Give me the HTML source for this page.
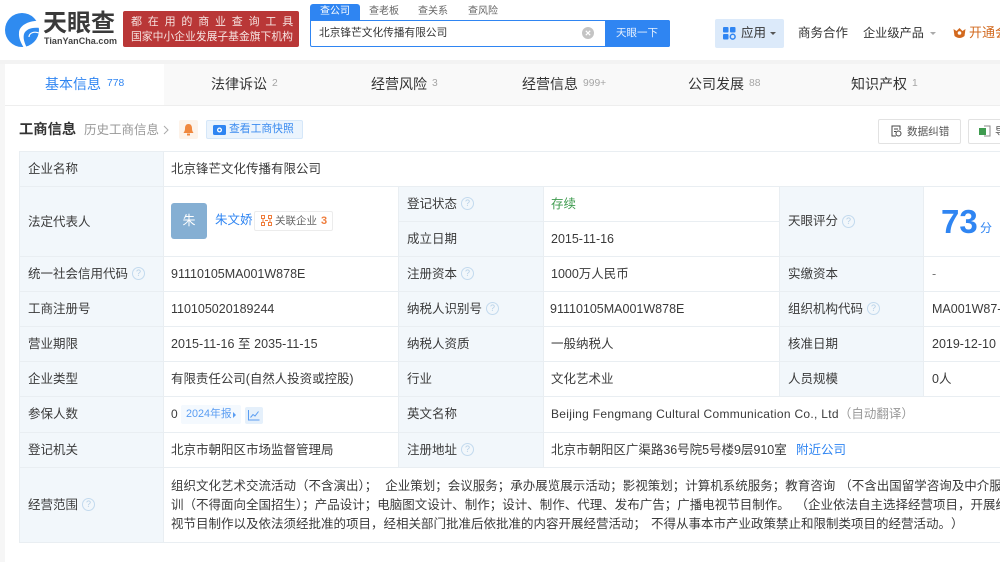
<!DOCTYPE html>
<html lang="zh"><head><meta charset="utf-8">
<style>
html,body{margin:0;padding:0;width:1000px;height:562px;overflow:hidden;background:#fff}
body{position:relative;font-family:"Liberation Sans","Noto Sans CJK SC",sans-serif;font-size:12.5px;color:#3a3a3a}
.b,.t{position:absolute}
.t{white-space:nowrap;line-height:16px}
.q{position:absolute;width:11px;height:11px;border:1px solid #c3daee;border-radius:50%;color:#b4cfe6;font-size:9px;line-height:11px;text-align:center}
.n{font-size:10.300px;color:#a5a5a5}
.h{background:#f2f7fb}
.l{background:#e9eef2}
.c{overflow:hidden}
</style></head><body>
<!-- page backdrop -->
<div class="b" style="left:0;top:60px;width:5px;height:502px;background:#f6f6f6"></div>
<div class="b" style="left:0;top:60px;width:1000px;height:4px;background:#f3f3f3"></div>

<!-- logo -->
<svg class="b" style="left:4px;top:12px" width="36" height="36" viewBox="0 0 36 36">
<circle cx="18" cy="18" r="17" fill="#2f8bf0"/>
<path d="M36 9C26 8 15 13 15 21C14.500 26 17 31 20 36L23 36C20 30 19 26 20 22C22 17 28 15 36 16Z" fill="#fff"/>
<path d="M35 21C30 19 25 21 25 25" fill="none" stroke="#fff" stroke-width="1.200"/>
</svg>
<div class="t" style="left:43px;top:11px;font-size:24px;line-height:26px;font-weight:bold;color:#3a3a3a">天眼查</div>
<div class="t" style="left:44px;top:35px;font-size:9px;line-height:12px;color:#444;letter-spacing:.05px;font-weight:bold">TianYanCha.com</div>

<!-- banner -->
<div class="b" style="left:123px;top:11px;width:176px;height:36px;background:#b93737;border-radius:2px"></div>
<div class="t" style="left:131px;top:14px;font-size:11px;color:#f6e3e0;letter-spacing:5.800px">都在用的商业查询工具</div>
<div class="t" style="left:131px;top:29px;font-size:10.800px;color:#f6e3e0">国家中小企业发展子基金旗下机构</div>

<!-- search -->
<div class="b" style="left:310px;top:4px;width:50px;height:17px;background:#2f85f2;border-radius:3px 3px 0 0"></div>
<div class="t" style="left:320px;top:4px;font-size:10px;color:#fff">查公司</div>
<div class="t" style="left:369px;top:4px;font-size:10px;color:#666">查老板</div>
<div class="t" style="left:418px;top:4px;font-size:10px;color:#666">查关系</div>
<div class="t" style="left:468px;top:4px;font-size:10px;color:#666">查风险</div>
<div class="b" style="left:310px;top:20px;width:358px;height:25px;border:1px solid #2f85f2;border-radius:0 2px 2px 2px;background:#fff"></div>
<div class="b" style="left:605px;top:20px;width:65px;height:27px;background:#2f85f2;border-radius:0 2px 2px 0"></div>
<div class="t" style="left:319px;top:25px;font-size:10.700px;color:#333">北京锋芒文化传播有限公司</div>
<div class="t" style="left:616px;top:25px;font-size:10.500px;color:#e8f1fd">天眼一下</div>
<svg class="b" style="left:582px;top:27px" width="12" height="12" viewBox="0 0 12 12"><circle cx="6" cy="6" r="6" fill="#c4c4c4"/><path d="M3.800 3.800L8.200 8.200M8.200 3.800L3.800 8.200" stroke="#fff" stroke-width="1.200"/></svg>

<!-- right nav -->
<div class="b" style="left:715px;top:19px;width:69px;height:29px;background:#dceafa;border-radius:2px"></div>
<svg class="b" style="left:723px;top:27px" width="13" height="13" viewBox="0 0 13 13" fill="#2f85f2"><rect width="5.500" height="5.500" rx="1"/><rect x="7" width="5.500" height="5.500" rx="1"/><rect y="7" width="5.500" height="5.500" rx="1"/><circle cx="9.700" cy="9.700" r="2.400" fill="none" stroke="#2f85f2" stroke-width="1.500"/></svg>
<div class="t" style="left:741px;top:25px;color:#333">应用</div>
<div class="b" style="left:770px;top:32px;border:3px solid transparent;border-top:3px solid #555"></div>
<div class="t" style="left:798px;top:25px;color:#333">商务合作</div>
<div class="t" style="left:863px;top:25px;color:#333;font-size:12.200px">企业级产品</div>
<div class="b" style="left:930px;top:32px;border:3px solid transparent;border-top:3px solid #aaa"></div>
<svg class="b" style="left:953px;top:28px" width="13" height="11" viewBox="0 0 12 11"><path d="M0 1L3 3L6 0L9 3L12 1L11 8Q6 12 1 8Z" fill="#d2691e"/><circle cx="6" cy="5" r="1.800" fill="#fff"/></svg>
<div class="t c" style="left:969px;top:25px;width:31px;color:#d2691e;font-size:13px">开通会员</div>

<!-- tabs -->
<div class="b" style="left:5px;top:64px;width:995px;height:41px;background:#f9f9f9;border-bottom:1px solid #eee"></div>
<div class="b" style="left:5px;top:64px;width:159px;height:41px;background:#fff"></div>
<div class="t" style="left:45px;top:76px;font-size:14px;color:#2f85f2">基本信息</div>
<div class="t" style="left:107px;top:76px;font-size:10.300px;color:#2f85f2">778</div>
<div class="t" style="left:211px;top:76px;font-size:14px;color:#333">法律诉讼</div>
<div class="t n" style="left:272px;top:76px">2</div>
<div class="t" style="left:371px;top:76px;font-size:14px;color:#333">经营风险</div>
<div class="t n" style="left:432px;top:76px">3</div>
<div class="t" style="left:522px;top:76px;font-size:14px;color:#333">经营信息</div>
<div class="t n" style="left:583px;top:76px">999+</div>
<div class="t" style="left:688px;top:76px;font-size:14px;color:#333">公司发展</div>
<div class="t n" style="left:749px;top:76px">88</div>
<div class="t" style="left:851px;top:76px;font-size:14px;color:#333">知识产权</div>
<div class="t n" style="left:912px;top:76px">1</div>

<!-- section title -->
<div class="t" style="left:19px;top:122px;font-size:14.300px;font-weight:bold;color:#333">工商信息</div>
<div class="t" style="left:84px;top:122px;color:#999">历史工商信息</div>
<svg class="b" style="left:163px;top:125px" width="6" height="10" viewBox="0 0 6 10"><path d="M1 1L5 5L1 9" fill="none" stroke="#aaa"/></svg>
<div class="b" style="left:179px;top:120px;width:19px;height:19px;background:#fdf3ea;border-radius:2px"></div>
<svg class="b" style="left:183px;top:123px" width="11" height="13" viewBox="0 0 11 13"><path d="M5.500 1C3 1 2 3 2 5.500C2 8 1 9 .5 10H10.500C10 9 9 8 9 5.500C9 3 8 1 5.500 1Z" fill="#f0883e"/><rect x="4" y="10.500" width="3" height="2" fill="#f0883e"/></svg>
<div class="b" style="left:206px;top:120px;width:95px;height:17px;background:#ebf4fd;border:1px solid #d5e7f9;border-radius:2px"></div>
<svg class="b" style="left:213px;top:124px" width="13" height="11" viewBox="0 0 13 11"><rect y="1" width="13" height="10" rx="1.500" fill="#2f85f2"/><circle cx="6.500" cy="6" r="2.500" fill="#fff"/><circle cx="6.500" cy="6" r="1.200" fill="#2f85f2"/></svg>
<div class="t" style="left:229px;top:121px;font-size:10.800px;color:#3c8cf0">查看工商快照</div>

<div class="b" style="left:878px;top:119px;width:81px;height:23px;border:1px solid #e2e2e2;border-radius:2px"></div>
<svg class="b" style="left:891px;top:125px" width="11" height="12" viewBox="0 0 11 12"><path d="M9 5V1H1V11H5M3 4H7M3 6.500H5" fill="none" stroke="#444"/><circle cx="7.500" cy="8.500" r="2.500" fill="none" stroke="#444"/></svg>
<div class="t" style="left:907px;top:124px;font-size:10.600px;color:#555">数据纠错</div>
<div class="b" style="left:968px;top:119px;width:32px;height:23px;border:1px solid #e2e2e2;border-right:0;border-radius:2px 0 0 2px"></div>
<svg class="b" style="left:979px;top:125px" width="12" height="12" viewBox="0 0 12 12"><path d="M5 1H11V11H5" fill="none" stroke="#888"/><rect y="3" width="7" height="7" fill="#3f9b4f"/></svg>
<div class="t c" style="left:995px;top:124px;width:5px;font-size:10.600px;color:#555">导出</div>

<!-- table fills -->
<div class="b h" style="left:19px;top:151px;width:144px;height:392px"></div>
<div class="b h" style="left:398px;top:186px;width:145px;height:281px"></div>
<div class="b h" style="left:779px;top:186px;width:144px;height:211px"></div>
<!-- horizontal lines -->
<div class="b l" style="left:19px;top:151px;width:981px;height:1px"></div>
<div class="b l" style="left:19px;top:186px;width:981px;height:1px"></div>
<div class="b l" style="left:398px;top:221px;width:381px;height:1px"></div>
<div class="b l" style="left:19px;top:256px;width:981px;height:1px"></div>
<div class="b l" style="left:19px;top:291px;width:981px;height:1px"></div>
<div class="b l" style="left:19px;top:326px;width:981px;height:1px"></div>
<div class="b l" style="left:19px;top:361px;width:981px;height:1px"></div>
<div class="b l" style="left:19px;top:396px;width:981px;height:1px"></div>
<div class="b l" style="left:19px;top:432px;width:981px;height:1px"></div>
<div class="b l" style="left:19px;top:467px;width:981px;height:1px"></div>
<div class="b l" style="left:19px;top:542px;width:981px;height:1px"></div>
<!-- vertical lines -->
<div class="b l" style="left:19px;top:151px;width:1px;height:392px"></div>
<div class="b l" style="left:163px;top:151px;width:1px;height:392px"></div>
<div class="b l" style="left:398px;top:186px;width:1px;height:281px"></div>
<div class="b l" style="left:543px;top:186px;width:1px;height:281px"></div>
<div class="b l" style="left:779px;top:186px;width:1px;height:211px"></div>
<div class="b l" style="left:923px;top:186px;width:1px;height:211px"></div>

<!-- col 1 labels -->
<div class="t" style="left:28px;top:161px">企业名称</div>
<div class="t" style="left:28px;top:214px">法定代表人</div>
<div class="t" style="left:28px;top:266px">统一社会信用代码</div><div class="q" style="left:132px;top:267px">?</div>
<div class="t" style="left:28px;top:301px">工商注册号</div>
<div class="t" style="left:28px;top:336px">营业期限</div>
<div class="t" style="left:28px;top:371px">企业类型</div>
<div class="t" style="left:28px;top:406px">参保人数</div>
<div class="t" style="left:28px;top:442px">登记机关</div>
<div class="t" style="left:28px;top:497px">经营范围</div><div class="q" style="left:82px;top:498px">?</div>

<!-- col 1 values -->
<div class="t" style="left:171px;top:161px">北京锋芒文化传播有限公司</div>
<div class="b" style="left:171px;top:203px;width:36px;height:36px;background:#85afd3;border-radius:3px"></div>
<div class="t" style="left:171px;top:213px;width:36px;text-align:center;font-size:13px;color:#fff">朱</div>
<div class="t" style="left:215px;top:212px;color:#2f85f2">朱文娇</div>
<div class="b" style="left:254px;top:211px;width:77px;height:18px;border:1px solid #ececec;border-radius:2px"></div>
<svg class="b" style="left:261px;top:215px" width="11" height="11" viewBox="0 0 11 11" fill="none" stroke="#ef7d3c"><rect x=".5" y=".5" width="3" height="3"/><rect x="7.500" y=".5" width="3" height="3"/><rect x=".5" y="7.500" width="3" height="3"/><rect x="7.500" y="7.500" width="3" height="3"/><path d="M2 4V7M9 4V7M4 5.500H7"/></svg>
<div class="t" style="left:275px;top:213px;font-size:10.500px;color:#666">关联企业</div>
<div class="t" style="left:321px;top:213px;font-size:11px;font-weight:bold;color:#ef7d3c">3</div>
<div class="t" style="left:171px;top:266px">91110105MA001W878E</div>
<div class="t" style="left:171px;top:301px">110105020189244</div>
<div class="t" style="left:171px;top:336px;letter-spacing:.05px">2015-11-16 至 2035-11-15</div>
<div class="t" style="left:171px;top:371px;letter-spacing:-.05px">有限责任公司(自然人投资或控股)</div>
<div class="t" style="left:171px;top:406px;font-size:12px">0</div>
<div class="b" style="left:181px;top:405px;width:60px;height:19px;background:#f4f9fe;border-radius:2px"></div>
<div class="t" style="left:186px;top:406px;font-size:10.800px;color:#5a9df2">2024年报</div>
<div class="b" style="left:233px;top:412px;border:3px solid transparent;border-left:3px solid #5a9df2"></div>
<div class="b" style="left:245px;top:407px;width:18px;height:17px;background:#e5f0fb;border-radius:2px"></div>
<svg class="b" style="left:248px;top:409px" width="12" height="12" viewBox="0 0 12 12" fill="none" stroke="#5a9df2"><path d="M.5 1V11H11.500M2.500 8.500L5 5.500L7 7L10.500 2.500"/></svg>
<div class="t" style="left:171px;top:442px">北京市朝阳区市场监督管理局</div>

<!-- col 2 -->
<div class="t" style="left:407px;top:196px">登记状态</div><div class="q" style="left:461px;top:197px">?</div>
<div class="t" style="left:407px;top:231px">成立日期</div>
<div class="t" style="left:407px;top:266px">注册资本</div><div class="q" style="left:461px;top:267px">?</div>
<div class="t" style="left:407px;top:301px">纳税人识别号</div><div class="q" style="left:486px;top:302px">?</div>
<div class="t" style="left:407px;top:336px">纳税人资质</div>
<div class="t" style="left:407px;top:371px">行业</div>
<div class="t" style="left:407px;top:406px">英文名称</div>
<div class="t" style="left:407px;top:442px">注册地址</div><div class="q" style="left:461px;top:443px">?</div>

<div class="t" style="left:551px;top:196px;color:#3f9b4f">存续</div>
<div class="t" style="left:551px;top:231px">2015-11-16</div>
<div class="t" style="left:551px;top:266px">1000万人民币</div>
<div class="t" style="left:550px;top:301px">91110105MA001W878E</div>
<div class="t" style="left:551px;top:336px">一般纳税人</div>
<div class="t" style="left:551px;top:371px">文化艺术业</div>
<div class="t" style="left:551px;top:406px;font-size:12px;letter-spacing:.3px">Beijing Fengmang Cultural Communication Co., Ltd<span style="color:#999;font-size:12.500px;letter-spacing:0">（自动翻译）</span></div>
<div class="t" style="left:551px;top:442px;letter-spacing:-.02px">北京市朝阳区广渠路36号院5号楼9层910室</div>
<div class="t" style="left:796px;top:442px;color:#2f85f2">附近公司</div>

<!-- col 3 -->
<div class="t" style="left:788px;top:213px">天眼评分</div><div class="q" style="left:842px;top:215px">?</div>
<div class="t" style="left:788px;top:266px">实缴资本</div>
<div class="t" style="left:788px;top:301px">组织机构代码</div><div class="q" style="left:867px;top:302px">?</div>
<div class="t" style="left:788px;top:336px">核准日期</div>
<div class="t" style="left:788px;top:371px">人员规模</div>

<div class="t" style="left:941px;top:204px;font-size:33px;line-height:36px;font-weight:bold;color:#2f85f2">73</div>
<div class="t" style="left:980px;top:220px;font-size:12px;color:#2f85f2">分</div>
<div class="t" style="left:932px;top:266px;color:#777">-</div>
<div class="t c" style="left:932px;top:301px;width:68px">MA001W87-8</div>
<div class="t" style="left:932px;top:336px">2019-12-10</div>
<div class="t" style="left:932px;top:371px">0人</div>

<!-- scope -->
<div class="t c" style="left:171px;top:478px;width:829px">组织文化艺术交流活动（不含演出）；<span style="margin-left:8px">企业策划；会议服务；承办展览展示活动；影视策划；计算机系统服务；教育咨询</span><span style="margin-left:4px">（不含出国留学咨询及中介服务）；</span></div>
<div class="t c" style="left:171px;top:497px;width:829px">训（不得面向全国招生）；产品设计；电脑图文设计、制作；设计、制作、代理、发布广告；广播电视节目制作。<span style="margin-left:12px">（企业依法自主选择经营项目，开展经营活动；</span></div>
<div class="t c" style="left:171px;top:516px;width:829px">视节目制作以及依法须经批准的项目，经相关部门批准后依批准的内容开展经营活动；<span style="margin-left:5px">不得从事本市产业政策禁止和限制类项目的经营活动</span><span style="text-spacing-trim:space-all">。）</span></div>
</body></html>
